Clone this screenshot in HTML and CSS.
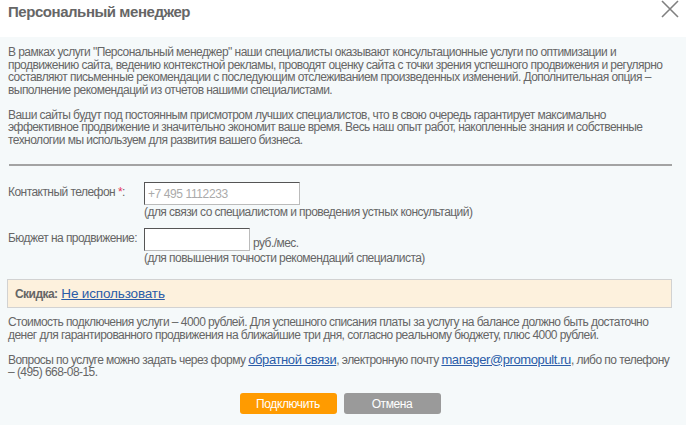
FILE: index.html
```html
<!DOCTYPE html>
<html lang="ru">
<head>
    <meta charset="UTF-8">
    <title>Персональный менеджер</title>
    <link rel="stylesheet" href="styles.css">
</head>
<body>

<div class="dialog">
    <div class="dialog-head">
        <h2>Персональный менеджер</h2>
        <span class="close">
            <svg width="18" height="18" viewBox="0 0 18 18">
                <path d="M1 1 L17 17 M17 1 L1 17" stroke="#808080" stroke-width="1.6" fill="none"/>
            </svg>
        </span>
    </div>

    <div class="dialog-body">
        <p>В рамках услуги "Персональный менеджер" наши специалисты оказывают консультационные услуги по оптимизации и продвижению сайта, ведению контекстной рекламы, проводят оценку сайта с точки зрения успешного продвижения и регулярно составляют письменные рекомендации с последующим отслеживанием произведенных изменений. Дополнительная опция – выполнение рекомендаций из отчетов нашими специалистами.</p>
        <p>Ваши сайты будут под постоянным присмотром лучших специалистов, что в свою очередь гарантирует максимально эффективное продвижение и значительно экономит ваше время. Весь наш опыт работ, накопленные знания и собственные технологии мы используем для развития вашего бизнеса.</p>

        <hr class="divider">

        <!-- Форма -->
        <div class="form-row">
            <label for="phone">Контактный телефон <span class="req">*</span>:</label>
            <div class="field">
                <input type="text" id="phone" class="inp-phone" placeholder="+7 495 1112233">
                <div class="hint">(для связи со специалистом и проведения устных консультаций)</div>
            </div>
        </div>
        <div class="form-row">
            <label for="budget">Бюджет на продвижение:</label>
            <div class="field">
                <div class="inline">
                    <input type="text" id="budget" class="inp-budget">
                    <span class="unit">руб./мес.</span>
                </div>
                <div class="hint">(для повышения точности рекомендаций специалиста)</div>
            </div>
        </div>

        <div class="discount">
            <b>Скидка:</b> <a href="#">Не использовать</a>
        </div>

        <p class="note">Стоимость подключения услуги – 4000 рублей. Для успешного списания платы за услугу на балансе должно быть достаточно денег для гарантированного продвижения на ближайшие три дня, согласно реальному бюджету, плюс 4000 рублей.</p>
        <p class="note">Вопросы по услуге можно задать через форму <a href="#">обратной связи</a>, электронную почту <a href="#">manager@promopult.ru</a>, либо по телефону – (495) 668-08-15.</p>

        <div class="buttons">
            <button class="btn btn-ok">Подключить</button>
            <button class="btn btn-cancel">Отмена</button>
        </div>
    </div>
</div>

</body>
</html>
```

FILE: styles.css
```css
/* база */
body {
    margin: 0;
    font-family: "Liberation Sans", Arial, sans-serif;
    color: #666;
    background: #f5f9fa;
}

/* шапка */
.dialog-head {
    height: 37px;
    background: #fff;
    display: flex;
    justify-content: space-between;
    align-items: flex-start;
    padding: 0 8px;
}
.dialog-head h2 {
    margin: 3px 0 0;
    font-size: 15px;
    font-weight: bold;
    letter-spacing: -0.45px;
    color: #666;
}
.close {
    margin-top: 0;
    margin-right: -1px;
    cursor: pointer;
}

/* тело */
.dialog-body {
    padding: 9px 14px 0 8px;
    font-size: 12px;
    line-height: 12.5px;
    letter-spacing: -0.55px;
}
.dialog-body p {
    margin: 0 0 12.5px;
}
.divider {
    border: none;
    border-top: 2px solid #a3a3a3;
    margin: 18px 0 16px 1px;
}

/* форма */
.form-row {
    display: flex;
    margin-bottom: 9px;
}
.form-row label {
    width: 136px;
    flex-shrink: 0;
    padding-top: 4px;
    white-space: nowrap;
}
.req {
    color: #e8345a;
}
input {
    height: 23px;
    box-sizing: border-box;
    border: 1px solid #bbb;
    border-top-color: #555;
    border-left-color: #555;
    background: #fff;
    padding: 2px 3px;
    font-family: inherit;
    font-size: 12px;
    letter-spacing: -0.4px;
    outline: none;
}
input::placeholder {
    color: #aaa;
}
.inp-phone {
    width: 156px;
}
.inp-budget {
    width: 106px;
}
.inline {
    display: flex;
    align-items: flex-end;
}
.unit {
    margin-left: 3px;
    padding-bottom: 1px;
}
.hint {
    margin-top: 1px;
}

/* скидка */
.discount {
    margin: 15px 0 8px -1px;
    height: 29px;
    box-sizing: border-box;
    background: #fdf1dd;
    border: 1px solid #d2d2d2;
    padding: 8px 7px 0;
}
.discount a {
    font-size: 13.5px;
    letter-spacing: -0.15px;
    margin-left: 1px;
}
a {
    color: #2a5ca8;
}
.note a {
    font-size: 13px;
    letter-spacing: -0.4px;
}

/* кнопки */
.buttons {
    display: flex;
    justify-content: center;
    gap: 7px;
    padding-top: 2px;
}
.btn {
    width: 97px;
    height: 21px;
    border: none;
    border-radius: 3px;
    color: #fff;
    font-family: inherit;
    font-size: 12px;
    letter-spacing: -0.4px;
    cursor: pointer;
}
.btn-ok {
    background: #ff9b00;
}
.btn-cancel {
    background: #9a9a9a;
}
```
